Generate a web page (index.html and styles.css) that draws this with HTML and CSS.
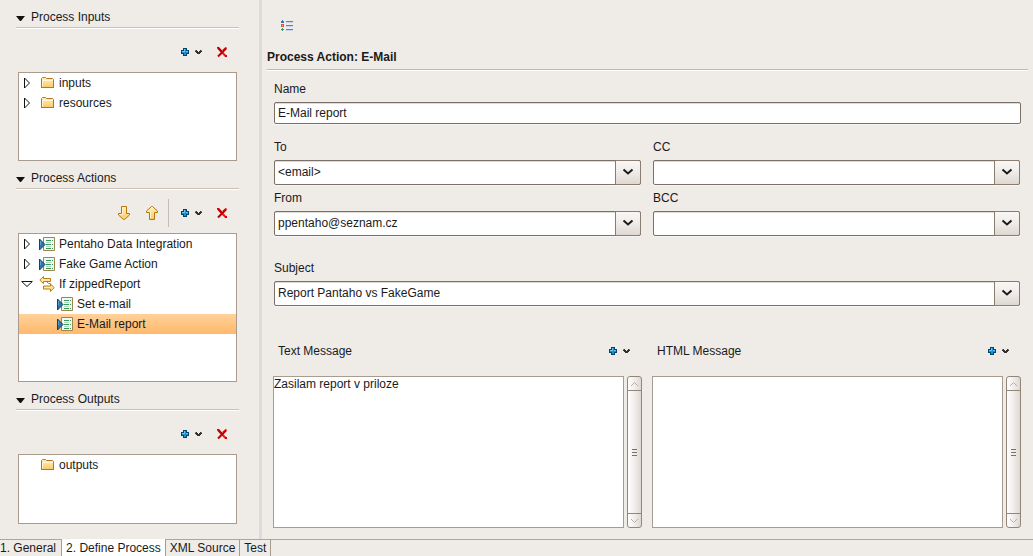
FILE: index.html
```html
<!DOCTYPE html>
<html lang="en">
<head>
<meta charset="utf-8">
<title>Process editor</title>
<link rel="stylesheet" href="styles.css">
</head>
<body>
<svg class="sprite" aria-hidden="true">
  <symbol id="plus" viewBox="0 0 9 10">
    <path fill="#00456b" d="M2 1h4v2h2v4h-2v2h-4v-2h-2v-4h2z"/>
    <path fill="#1b8fd0" d="M3 2h2v2h2v2h-2v2h-2v-2h-2v-2h2z"/>
    <path fill="#63c3f3" d="M3 2h1v3h-3v-1h2zM5 4h2v1h-2z"/>
  </symbol>
  <symbol id="chev" viewBox="0 0 9 6">
    <path fill="#8c8985" d="M0 1h1v1h-1zM6 1h1v1h-1z"/>
    <path fill="#33322f" d="M1 1h1v1h1v1h1v-1h1v-1h1v1h1v1h-1v1h-1v1h-3v-1h-1v-1h-1v-1h1z"/>
  </symbol>
  <symbol id="delete" viewBox="0 0 12 12">
    <path fill="none" stroke="#f01818" stroke-width="2" d="M2 2 10 10.5M10.500 1.500 7 4.500"/>
    <path fill="none" stroke="#bd0000" stroke-width="2" d="M10 2.500 2 10.500M2 1.500 6 6"/>
    <path fill="#d80000" d="M1 1h2v1h-2zM9 9h2v2h-2z"/>
  </symbol>
  <symbol id="down" viewBox="0 0 16 16">
    <path fill="url(#gold)" stroke="#b5760b" d="M5.500 1.500h5v7h3v1.500l-5 4.500h-1l-5-4.500v-1.500h3z"/>
    <path fill="none" stroke="#fff3c4" d="M6.500 2.500v7h-3"/>
  </symbol>
  <symbol id="up" viewBox="0 0 16 16">
    <path fill="url(#gold)" stroke="#b5760b" d="M5.500 14.500h5v-7h3v-1.500l-5-4.500h-1l-5 4.500v1.500h3z"/>
    <path fill="none" stroke="#fff3c4" d="M6.500 13.500v-7h-3"/>
  </symbol>
  <symbol id="folder" viewBox="0 0 16 16">
    <path fill="url(#gold)" stroke="#b87422" d="M2.500 12.500v-9l1-1h3l1 1h6l1 1v8z"/>
    <path fill="none" stroke="#fff6d8" d="M3.500 11.500v-6h10.500"/>
    <path fill="none" stroke="#b87422" d="M2 12.500h13"/>
  </symbol>
  <symbol id="action" viewBox="0 0 16 16">
    <path fill="#f2f8f2" stroke="#9f8648" d="M4.500 1.500h11v13h-11z"/>
    <path fill="none" stroke="#36965b" d="M7 4.500h5M7 8.500h5M7 12.500h5M13 4.500h1M13 8.500h1M13 12.500h1"/>
    <path fill="none" stroke="#b4d9bf" d="M7 6.500h5M7 10.500h5"/>
    <path fill="#2c78a8" stroke="#123f70" d="M.5 3v11l5.500-5.500z"/>
    <path fill="#5aa6c9" d="M1 5h1v4h-1z"/>
  </symbol>
  <symbol id="branch" viewBox="0 0 16 16">
    <path fill="#ffe9a4" stroke="#ba7d12" d="M4.500.500v2h7v3h-7v2l-3.700-3.500z"/>
    <path fill="#ffe9a4" stroke="#ba7d12" d="M11.500 8v2h-7v3h7v2.500l3.700-4z"/>
    <path fill="none" stroke="#ba7d12" d="M7.500 5.500l2 2h2"/>
  </symbol>
  <symbol id="closed" viewBox="0 0 12 14">
    <path fill="#fff" stroke="#111" d="M3.500 2v10l5-5z"/>
  </symbol>
  <symbol id="open" viewBox="0 0 12 14">
    <path fill="#fff" stroke="#111" d="M.7 4.500h10.600l-5.300 5z"/>
  </symbol>
  <symbol id="combo" viewBox="0 0 12 8">
    <path fill="none" stroke="#1c1c1c" stroke-width="2" d="M1.500 1.500 6 5.500l4.500-4"/>
  </symbol>
  <linearGradient id="gold" x1="0" y1="0" x2="0" y2="1">
    <stop offset="0" stop-color="#fff3bd"/><stop offset="1" stop-color="#fdc765"/>
  </linearGradient>
</svg>

<div class="editor">
  <aside class="outline">
    <section class="section">
      <h2 class="section-title"><span class="twistie"></span>Process Inputs</h2>
      <div class="toolbar">
        <button class="tool menu" aria-label="Add input"><svg class="i-plus"><use href="#plus"/></svg><svg class="i-chev"><use href="#chev"/></svg></button>
        <button class="tool" aria-label="Delete input"><svg class="i-delete"><use href="#delete"/></svg></button>
      </div>
      <ul class="tree inputs">
        <li class="row"><svg class="i-expand"><use href="#closed"/></svg><svg class="i-node"><use href="#folder"/></svg>inputs</li>
        <li class="row"><svg class="i-expand"><use href="#closed"/></svg><svg class="i-node"><use href="#folder"/></svg>resources</li>
      </ul>
    </section>

    <section class="section">
      <h2 class="section-title"><span class="twistie"></span>Process Actions</h2>
      <div class="toolbar">
        <div class="movers">
          <button class="tool" aria-label="Move down"><svg class="i-node"><use href="#down"/></svg></button>
          <button class="tool" aria-label="Move up"><svg class="i-node"><use href="#up"/></svg></button>
        </div>
        <button class="tool menu" aria-label="Add action"><svg class="i-plus"><use href="#plus"/></svg><svg class="i-chev"><use href="#chev"/></svg></button>
        <button class="tool" aria-label="Delete action"><svg class="i-delete"><use href="#delete"/></svg></button>
      </div>
      <ul class="tree actions">
        <li class="row"><svg class="i-expand"><use href="#closed"/></svg><svg class="i-node"><use href="#action"/></svg>Pentaho Data Integration</li>
        <li class="row"><svg class="i-expand"><use href="#closed"/></svg><svg class="i-node"><use href="#action"/></svg>Fake Game Action</li>
        <li class="row"><svg class="i-expand"><use href="#open"/></svg><svg class="i-node"><use href="#branch"/></svg>If zippedReport</li>
        <li class="row child"><svg class="i-node"><use href="#action"/></svg>Set e-mail</li>
        <li class="row child selected"><svg class="i-node"><use href="#action"/></svg>E-Mail report</li>
      </ul>
    </section>

    <section class="section last">
      <h2 class="section-title"><span class="twistie"></span>Process Outputs</h2>
      <div class="toolbar">
        <button class="tool menu" aria-label="Add output"><svg class="i-plus"><use href="#plus"/></svg><svg class="i-chev"><use href="#chev"/></svg></button>
        <button class="tool" aria-label="Delete output"><svg class="i-delete"><use href="#delete"/></svg></button>
      </div>
      <ul class="tree outputs">
        <li class="row leaf"><svg class="i-node"><use href="#folder"/></svg>outputs</li>
      </ul>
    </section>
  </aside>

  <main class="detail">
    <div class="detail-tools">
      <button class="tool" aria-label="Show list">
        <svg class="i-list" viewBox="0 0 14 12">
          <path fill="#3c78b8" d="M2 0h1v1h1v2h-3v-2h1z"/>
          <path fill="#e0523f" d="M1 4h3v3h-3z"/><path fill="#f6b0a2" d="M2 5h1v1h-1z"/>
          <path fill="#3d9a5c" d="M2 8h1v1h1v1h-1v1h-1v-1h-1v-1h1z"/>
          <path fill="#5c81cd" d="M6 1h7v1h-7zM6 5h7v1h-7zM6 9h7v1h-7z"/>
          <path fill="#c6d3ea" d="M6 2h7v1h-7zM6 6h7v1h-7zM6 10h7v1h-7z"/>
        </svg>
      </button>
    </div>
    <h1 class="detail-title">Process Action: E-Mail</h1>

    <form class="fields">
      <div class="field wide">
        <label for="name">Name</label>
        <input class="text" id="name" type="text" value="E-Mail report">
      </div>
      <div class="field">
        <label for="to">To</label>
        <div class="combo"><select id="to"><option>&lt;email&gt;</option></select><span class="drop"><svg class="i-combo"><use href="#combo"/></svg></span></div>
      </div>
      <div class="field">
        <label for="cc">CC</label>
        <div class="combo"><select id="cc"><option></option></select><span class="drop"><svg class="i-combo"><use href="#combo"/></svg></span></div>
      </div>
      <div class="field">
        <label for="from">From</label>
        <div class="combo"><select id="from"><option>ppentaho@seznam.cz</option></select><span class="drop"><svg class="i-combo"><use href="#combo"/></svg></span></div>
      </div>
      <div class="field">
        <label for="bcc">BCC</label>
        <div class="combo"><select id="bcc"><option></option></select><span class="drop"><svg class="i-combo"><use href="#combo"/></svg></span></div>
      </div>
      <div class="field wide subject">
        <label for="subject">Subject</label>
        <div class="combo"><select id="subject"><option>Report Pantaho vs FakeGame</option></select><span class="drop"><svg class="i-combo"><use href="#combo"/></svg></span></div>
      </div>
    </form>

    <div class="messages">
      <div class="message">
        <div class="message-head">
          <label for="text-message">Text Message</label>
          <button class="tool menu" aria-label="Insert into text message"><svg class="i-plus"><use href="#plus"/></svg><svg class="i-chev"><use href="#chev"/></svg></button>
        </div>
        <div class="message-body">
          <textarea id="text-message">Zasilam report v priloze</textarea>
          <div class="scrollbar">
            <span class="step"><svg viewBox="0 0 9 6"><path d="M1 5l3.500-3.500L8 5"/></svg></span>
            <span class="thumb"><i></i><i></i><i></i></span>
            <span class="step end"><svg viewBox="0 0 9 6"><path d="M1 1l3.500 3.500L8 1"/></svg></span>
          </div>
        </div>
      </div>
      <div class="message">
        <div class="message-head">
          <label for="html-message">HTML Message</label>
          <button class="tool menu" aria-label="Insert into HTML message"><svg class="i-plus"><use href="#plus"/></svg><svg class="i-chev"><use href="#chev"/></svg></button>
        </div>
        <div class="message-body">
          <textarea id="html-message"></textarea>
          <div class="scrollbar">
            <span class="step"><svg viewBox="0 0 9 6"><path d="M1 5l3.500-3.500L8 5"/></svg></span>
            <span class="thumb"><i></i><i></i><i></i></span>
            <span class="step end"><svg viewBox="0 0 9 6"><path d="M1 1l3.500 3.500L8 1"/></svg></span>
          </div>
        </div>
      </div>
    </div>
  </main>
</div>

<nav class="tabs">
  <button class="tab first">1. General</button>
  <button class="tab active">2. Define Process</button>
  <button class="tab">XML Source</button>
  <button class="tab">Test</button>
</nav>
</body>
</html>
```

FILE: styles.css
```css
* { box-sizing: border-box; }

body {
  margin: 0;
  min-height: 100vh;
  display: flex;
  flex-direction: column;
  background: #efebe7;
  color: #1a1a1a;
  font: 12px/16px "Liberation Sans", Arial, sans-serif;
}

svg { display: block; flex: none; }
button, input, select, textarea { font: inherit; color: inherit; }

.sprite { position: absolute; width: 0; height: 0; }
.i-plus { width: 9px; height: 10px; }
.i-chev { width: 9px; height: 6px; }
.i-delete { width: 12px; height: 12px; }
.i-node { width: 16px; height: 16px; }
.i-expand { width: 12px; height: 14px; }
.i-combo { width: 12px; height: 8px; }
.i-list { width: 14px; height: 12px; }

.editor { flex: 1; display: flex; }

/* Left outline */
.outline {
  flex: none;
  width: 262px;
  display: flex;
  flex-direction: column;
  gap: 7px;
  padding: 7px 20px 15px 16px;
  border-right: 3px solid #dcdcdc;
}
.section { display: flex; flex-direction: column; }
.section.last { flex: 1; }
.section-title {
  display: flex;
  align-items: center;
  gap: 6px;
  margin: 0;
  height: 22px;
  padding-bottom: 2px;
  border-bottom: 1px solid #fff;
  box-shadow: inset 0 -1px #c9c0b8;
  font-size: 12px;
  font-weight: normal;
}
.twistie {
  width: 9px;
  margin-top: 3px;
  border: 4px solid transparent;
  border-top: 5px solid #111;
  border-bottom: 0;
}
.toolbar {
  display: flex;
  justify-content: flex-end;
  align-items: center;
  gap: 12px;
  height: 43px;
  padding: 3px 11px 0 0;
}
.tool { display: flex; padding: 0; border: 0; background: none; }
.menu { align-items: center; gap: 5px; }
.movers {
  display: flex;
  align-items: center;
  gap: 12px;
  height: 28px;
  padding-right: 8px;
  border-right: 1px solid #c4bbb2;
}

.tree {
  margin: 0 2px;
  padding: 0;
  list-style: none;
  background: #fff;
  border: 1px solid #a99b8d;
}
.inputs { min-height: 89px; }
.actions { min-height: 149px; }
.outputs { flex: 1; min-height: 70px; }
.row {
  display: flex;
  align-items: center;
  height: 20px;
  padding-left: 2px;
}
.row .i-expand { margin-right: 6px; }
.row .i-node { margin-right: 4px; }
.leaf { padding-left: 20px; }
.child { padding-left: 38px; }
.selected { background: linear-gradient(#ffd19a, #ffb96b); }

/* Detail form */
.detail { flex: 1; min-width: 0; display: flex; flex-direction: column; }
.detail-tools { height: 49px; padding: 20px 0 0 18px; }
.detail-title {
  margin: 0 5px;
  height: 22px;
  border-bottom: 1px solid #fff;
  box-shadow: inset 0 -1px #c0b9b2;
  font-size: 12px;
  font-weight: bold;
}
.fields {
  display: grid;
  grid-template-columns: 1fr 1fr;
  column-gap: 11px;
  padding: 10px 12px 0;
}
.wide { grid-column: 1 / -1; }
.field { display: flex; flex-direction: column; gap: 5px; margin-bottom: 5px; }
.field:first-child { margin-bottom: 15px; }
.subject { margin-top: 19px; }
.text {
  height: 22px;
  padding: 0 3px;
  border: 1px solid #7b7067;
  border-radius: 2px;
  background: #fff;
  box-shadow: inset 0 1px #dedbd5, 0 1px #f8f6f4;
}
.combo { display: grid; grid-template-columns: 1fr 26px; margin-right: 1px; }
.combo select {
  grid-area: 1 / 1 / 2 / 3;
  height: 25px;
  padding: 0 30px 2px 3px;
  border: 1px solid #7b7067;
  border-radius: 2px;
  background: #fff;
  box-shadow: inset 0 1px #dedbd5, 0 1px #f8f6f4;
  appearance: none;
}
.drop {
  grid-area: 1 / 2 / 2 / 3;
  z-index: 1;
  display: flex;
  align-items: center;
  justify-content: center;
  padding-bottom: 2px;
  border: 1px solid #8a7d6f;
  border-radius: 0 2px 2px 0;
  background: linear-gradient(#f9f7f6, #efebe8 50%, #dfd8d1);
  pointer-events: none;
}

.messages {
  flex: 1;
  display: grid;
  grid-template-columns: 1fr 1fr;
  gap: 10px;
  padding: 30px 12px 11px 11px;
}
.message { display: flex; flex-direction: column; gap: 15px; }
.message-head {
  display: flex;
  align-items: center;
  justify-content: space-between;
  height: 20px;
  padding: 0 10px 0 5px;
}
.message-body { flex: 1; display: flex; gap: 3px; }
textarea {
  flex: 1;
  min-width: 0;
  min-height: 152px;
  padding: 0;
  border: 1px solid #a99b8d;
  background: #fff;
  line-height: 15px;
  resize: none;
  overflow: hidden;
}
.scrollbar {
  display: flex;
  flex-direction: column;
  width: 15px;
  border: 1px solid #92867b;
  border-radius: 3px;
  background: linear-gradient(90deg, #fff, #f1edea 50%, #ded8d2);
}
.step {
  display: flex;
  align-items: center;
  justify-content: center;
  height: 14px;
  border-bottom: 1px solid #92867b;
}
.step.end { border-bottom: 0; border-top: 1px solid #92867b; }
.step svg { width: 9px; height: 6px; fill: none; stroke: #b8afa6; }
.thumb {
  flex: 1;
  display: flex;
  flex-direction: column;
  align-items: center;
  justify-content: center;
  gap: 2px;
}
.thumb i { width: 5px; height: 1px; background: #7b7067; }

/* Page tabs */
.tabs { display: flex; height: 17px; box-shadow: inset 0 1px #b0a598; }
.tab {
  padding: 1px 4px 0;
  border: 0;
  border-right: 1px solid #a99b8d;
  background: none;
  line-height: 16px;
}
.tab.first { padding: 1px 5px 0 0; }
.tab.active { background: #fff; }
```
